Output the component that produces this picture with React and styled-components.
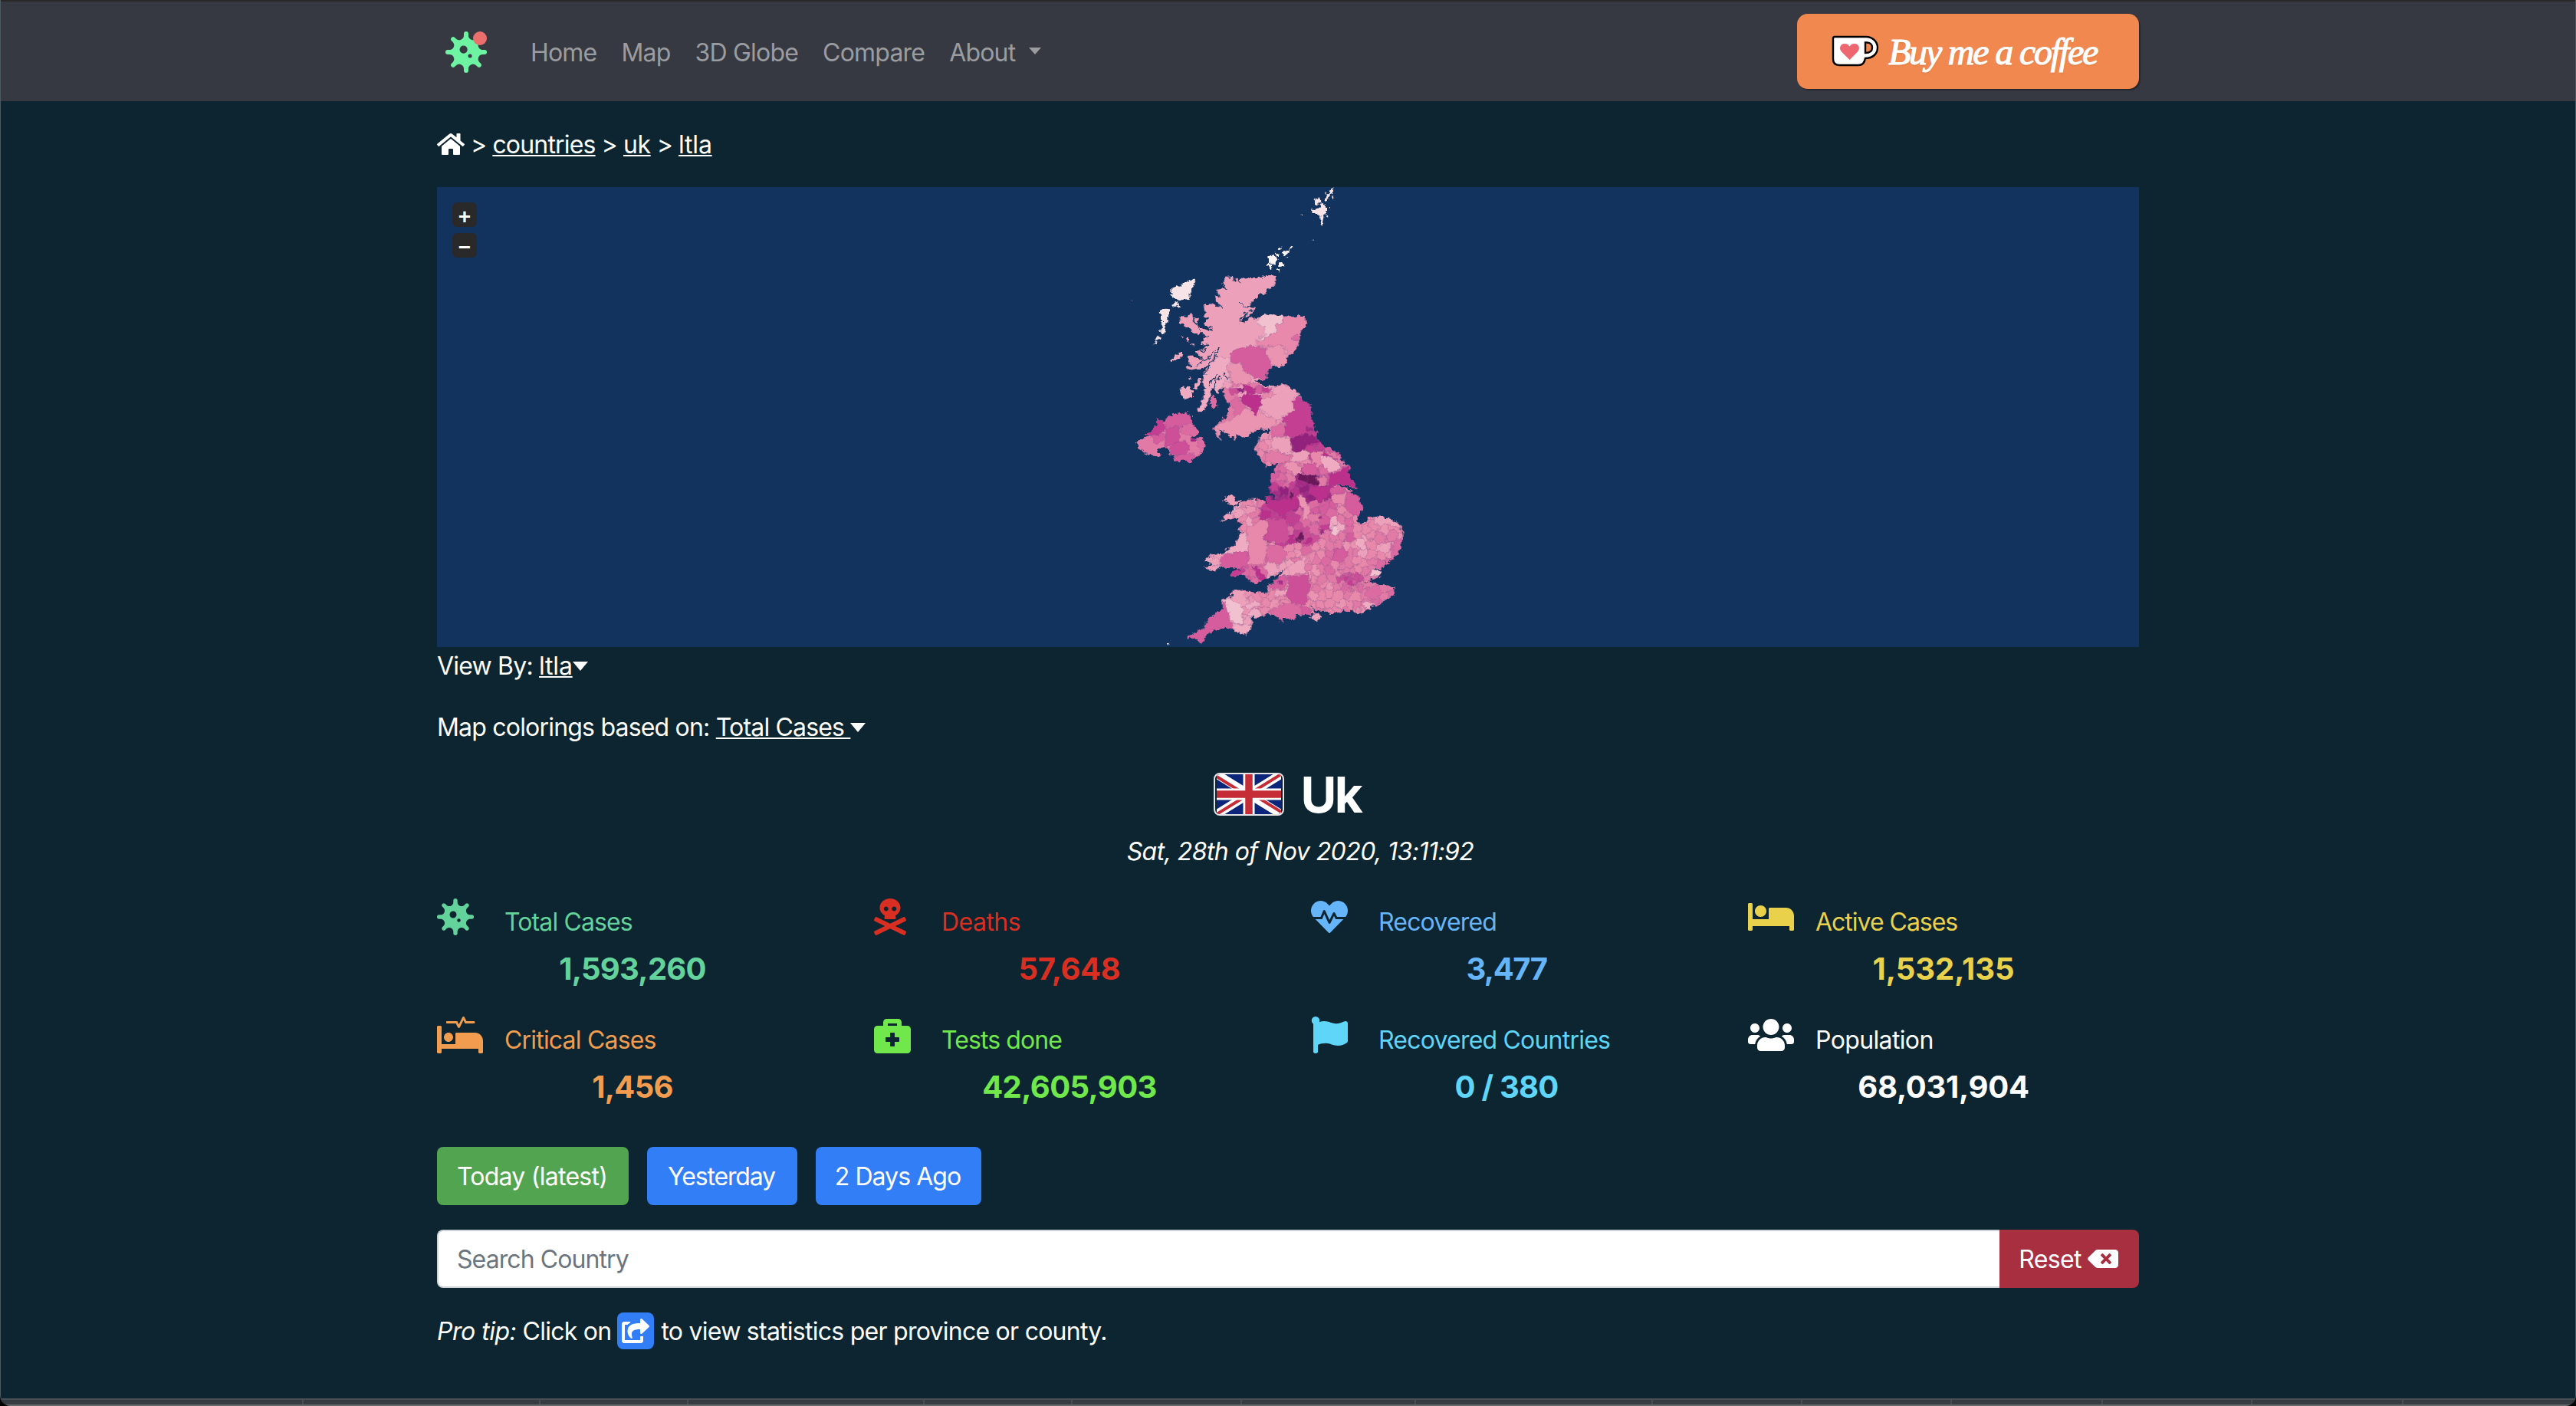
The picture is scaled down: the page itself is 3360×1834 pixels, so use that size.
import React from "react";
import styled, { createGlobalStyle } from "styled-components";
import {
  FaVirus,
  FaSkullCrossbones,
  FaHeartbeat,
  FaBed,
  FaProcedures,
  FaBriefcaseMedical,
  FaFlag,
  FaUsers,
  FaHome,
  FaBackspace,
  FaShareSquare,
} from "react-icons/fa";

const GlobalStyle = createGlobalStyle`
  *, *::before, *::after { box-sizing: border-box; }
  html { background: #000; }
  body {
    margin: 0;
    background: #000;
    color: #fff;
    font: 430 32px/50px Inter, "Liberation Sans", sans-serif;
    letter-spacing: -0.8px;
  }
`;

const Page = styled.div`
  height: 1834px;
  overflow: hidden;
  display: flex;
  flex-direction: column;
  background: #0c2530;
  border: solid #4b5a61;
  border-width: 0 1px;
  border-radius: 0 0 14px 14px;
`;

const NavBar = styled.nav`
  height: 132px;
  flex: none;
  background: #363941;
  border-top: 2px solid #272727;
`;

const Container = styled.div`
  width: 2220px;
  margin: 0 auto;
`;

const NavInner = styled(Container)`
  display: flex;
  align-items: flex-start;
  padding-top: 16px;
`;

const Brand = styled.a`
  position: relative;
  display: block;
  width: 54px;
  height: 54px;
  margin: 23px 57px 0 11px;
  svg { display: block; }
`;

const BrandDot = styled.span`
  position: absolute;
  top: 0;
  right: 0;
  width: 18px;
  height: 18px;
  border-radius: 50%;
  background: #eb6f6c;
`;

const NavLinks = styled.div`
  display: flex;
  gap: 32px;
  padding-top: 26px;
`;

const NavLink = styled.a`
  color: #9a9ca0;
`;

const Caret = styled.span`
  display: inline-block;
  margin-left: ${(p) => p.$gap || 0}px;
  vertical-align: ${(p) => (p.$small ? 9 : 5)}px;
  border: ${(p) => (p.$small ? 8.5 : 10)}px solid transparent;
  border-top: ${(p) => (p.$small ? 9 : 12)}px solid currentColor;
  border-bottom: 0;
`;

const CoffeeButton = styled.button`
  display: flex;
  align-items: center;
  width: 446px;
  height: 98px;
  margin: 0 0 0 auto;
  padding: 0 0 0 45px;
  border: 0;
  border-radius: 14px;
  background: #f0884f;
  box-shadow: 2px 2px 1px rgba(0, 0, 0, 0.28);
  color: #fff;
`;

const CoffeeText = styled.span`
  margin: 2px 0 0 12px;
  font: italic 400 48px/60px "Liberation Serif", serif;
  letter-spacing: -2.2px;
  white-space: nowrap;
  -webkit-text-stroke: 1.1px #fff;
  text-shadow: 0 2px 2px rgba(34, 34, 34, 0.08);
`;

const Main = styled(Container)`
  padding-top: 32px;
  flex: none;
`;

const Breadcrumb = styled.div`
  display: flex;
  align-items: center;
  height: 48px;
  gap: 8px;
  svg { display: block; width: 36px; }
  > :not(svg) { padding-top: 2px; }
`;

const TextLink = styled.a`
  color: #fff;
  letter-spacing: ${(p) => p.$ls ?? -0.82}px;
  text-decoration: underline;
  text-decoration-thickness: 2px;
  text-underline-offset: 2px;
  text-decoration-skip-ink: none;
  white-space: pre;
`;

const MapFrame = styled.div`
  position: relative;
  display: flex;
  justify-content: center;
  height: 600px;
  margin-top: 32px;
  background: #12335e;
`;

const ZoomControls = styled.div`
  position: absolute;
  left: 20px;
  top: 20px;
  display: flex;
  flex-direction: column;
  gap: 8px;
`;

const ZoomButton = styled.button`
  width: 32px;
  height: 32px;
  padding: 5px 0 0;
  border: 0;
  border-radius: 6px;
  background: #292929;
  color: #fff;
  text-align: center;
  font: 700 28px/28px "Liberation Sans", sans-serif;
`;

const OptionLine = styled.div`
  height: 48px;
  margin-bottom: ${(p) => p.$after || 0}px;
`;

const Title = styled.h1`
  display: flex;
  justify-content: center;
  align-items: center;
  gap: 22px;
  height: 77px;
  margin: 26px 0 11px;
  padding-right: 2px;
  font-size: 64px;
  line-height: 77px;
  font-weight: 680;
  letter-spacing: -2.6px;
`;

const FlagBox = styled.span`
  width: 92px;
  height: 56px;
  border: 2px solid #e4e4e6;
  border-radius: 8px;
  overflow: hidden;
  padding: 0 2px;
  margin-bottom: 1px;
  svg { display: block; }
`;

const DateLine = styled.div`
  height: 48px;
  padding-left: 32px;
  text-align: center;
  font-style: italic;
  letter-spacing: -0.55px;
`;

const StatsGrid = styled.div`
  display: grid;
  grid-template-columns: repeat(4, 570px);
  grid-auto-rows: 154px;
  margin: 38px -60px 0 0;
`;

const Stat = styled.section`
  width: 510px;
  color: ${(p) => p.$color};
`;

const StatHead = styled.div`
  display: flex;
  height: 68px;
`;

const StatIcon = styled.div`
  width: 88px;
  flex: none;
  svg { display: block; height: 48px; width: ${(p) => p.$w}px; }
`;

const StatLabel = styled.div`
  padding-top: 6px;
  letter-spacing: ${(p) => p.$ls - 0.06}px;
  white-space: nowrap;
`;

const StatValue = styled.div`
  text-align: center;
  font-size: 40px;
  line-height: 48px;
  font-weight: 680;
  letter-spacing: ${(p) => p.$ls}px;
`;

const DayButtons = styled.div`
  display: flex;
  gap: 24px;
  margin-top: 16px;
`;

const DayButton = styled.button`
  width: ${(p) => p.$w}px;
  height: 76px;
  padding: 2px 2px 0 0;
  border: 0;
  border-radius: 8px;
  background: ${(p) => (p.$active ? "#53a451" : "#327ef7")};
  color: #fff;
  font: inherit;
  letter-spacing: ${(p) => p.$ls}px;
`;

const SearchGroup = styled.div`
  display: flex;
  height: 76px;
  margin-top: 32px;
`;

const SearchInput = styled.input`
  flex: 1;
  min-width: 0;
  padding: 2px 24px 0;
  border: 2px solid #ced4da;
  border-right: 0;
  border-radius: 8px 0 0 8px;
  background: #fff;
  font: inherit;
  letter-spacing: -0.92px;
  &::placeholder { color: #6c757d; opacity: 1; }
`;

const ResetButton = styled.button`
  display: flex;
  align-items: center;
  justify-content: center;
  gap: 8px;
  width: 182px;
  padding: 0 2px 0 0;
  border: 0;
  border-radius: 0 8px 8px 0;
  background: #a72f40;
  color: #fff;
  font: inherit;
  letter-spacing: -0.65px;
  svg { display: block; width: 40px; }
  span { padding-top: 2px; }
`;

const Tip = styled.p`
  display: flex;
  align-items: center;
  height: 48px;
  margin: 32px 0 0;
  white-space: pre;
`;

const TipText = styled.span`
  padding-top: 2px;
  letter-spacing: -0.74px;
`;

const TipLead = styled.em`
  padding-top: 2px;
  letter-spacing: -0.5px;
`;

const ShareBadge = styled.span`
  display: flex;
  align-items: center;
  justify-content: center;
  width: 48px;
  height: 48px;
  margin: 0 9px 0 8px;
  border-radius: 8px;
  background: #327ef7;
  svg { width: 36px; }
`;

const TableEdge = styled.div`
  display: flex;
  flex: none;
  height: 10px;
  margin-top: 64px;
  background: #373b42;
  border-top: 2px solid #484f54;
  border-bottom: 2px solid #676a6b;
`;

const HeadCell = styled.span`
  flex: none;
  width: ${(p) => p.$w}px;
  border-right: 2px solid #484f54;
`;

/* ---------- choropleth map ---------- */

const SHADES = {
  O: "#fdf5f3", N: "#f7e4e6", L: "#f1c1d0", K: "#eeabc2", P: "#eda0ba",
  Q: "#eb94b1", R: "#e888aa", S: "#e27aa6", T: "#dc6ba2", U: "#d55c9d",
  V: "#cd4f98", W: "#c43f92", X: "#bb308b", Y: "#a52a85", Z: "#92227b", D: "#6b185a",
};
const ORDER = "ONLKPQRSTUVWXYZD";

// The south is drawn 900 units below the north origin.
const parse = (s, dy = 0) =>
  s.trim().split(/\s+/).map((p) => {
    const [x, y] = p.split(",").map(Number);
    return [x, y + dy];
  });
const toPoints = (pts) => pts.map((p) => p[0].toFixed(1) + "," + p[1].toFixed(1)).join(" ");

const COAST = [
  ...parse(`480,354 492,366 505,364 508,382 518,362 526,384 532,376 548,370 604,368 640,356 675,360 668,405 640,415
  604,440 575,466 572,482 596,486 570,515 548,520 530,542 552,540 572,526 600,522 640,508 662,514 700,518 780,516 796,548
  775,575 762,620 748,652 722,668 718,700 695,714 660,714 638,730 636,760 625,768 590,770 600,776 625,788 675,788 700,782
  725,795 760,812 775,840 805,865 812,910 825,960`),
  ...parse(`832,65 835,100 860,125 890,135 918,155 935,185 966,208 955,235 975,265 990,292 970,290 950,278 905,278
  930,284 950,290 995,320 1015,370 1000,395 985,412 1003,428 1022,425 1032,403 1100,405 1140,418 1165,445 1169,485 1155,545
  1120,575 1085,576 1118,580 1085,605 1050,608 1082,612 1080,635 1040,655 1005,653 1060,660 1075,672 1138,675 1132,708
  1085,740 1050,755 1005,783 960,770 890,780 850,770 830,768 805,750 820,770 828,780 800,785 750,790 750,805 700,800
  698,818 690,800 645,782 590,798 582,785 575,845 555,866 530,855 500,840 470,835 430,850 405,862 392,880 380,900 372,885
  345,875 325,885 328,868 350,862 385,840 410,800 460,765 465,725 500,715 500,695 550,690 635,702 640,680 680,640 712,602
  675,632 640,642 600,665 570,655 550,630 500,632 500,620 540,610 465,595 450,605 432,615 400,605 395,595 425,590 388,575
  415,550 460,545 510,515 535,468 550,462 525,460 530,440 545,432 528,425 525,405 480,415 455,420 500,380 510,365 535,350
  560,335 615,335 640,355 630,325 650,315 665,342 668,325 645,300 655,275 648,260 650,235 668,235 668,210 680,195 665,195
  655,190 650,205 630,210 625,190 608,175 592,135 610,85 650,65 640,62 600,60 575,80 550,92 515,80 512,102 480,75 450,60
  458,105 445,95 430,60 440,45 445,40`, 900),
  ...parse(`478,905 490,880 490,860 468,830 470,800 455,800 448,820 430,800 418,805 412,840 400,870 395,892 368,892
  370,878 385,840 400,800 385,790 390,745 405,715 385,720 340,728 315,722 340,712 325,675 345,670 370,680 395,690 350,655
  385,650 400,635 375,625 395,600 380,575 370,585 350,585 330,560 290,540 305,512 328,520 338,498 355,530 355,555 385,568
  410,575 425,570 385,545 410,525 385,515 395,505 388,475 415,465 450,482 430,435 455,440 440,415 480,405 460,395`),
];

const ULSTER = parse(`205,22 235,30 255,5 300,-3 345,5 345,35 360,50 375,75 342,95 380,95 395,105 398,130 385,155
  355,162 350,180 335,192 320,182 275,188 272,168 255,158 250,135 235,125 210,140 222,158 205,168 180,162 150,148 125,112
  145,98 180,90 155,80 190,65 205,35`, 900);

const NORTH = [
  ["K", "450,675 500,682 480,712 490,740 497,780 470,765 460,800 448,820 420,800 412,840 400,870 395,892 368,892 385,840 400,800 385,790 390,745 405,715 430,690"],
  ["L", "600,522 640,508 662,514 695,518 705,543 675,550 672,585 640,590 630,608 595,608 630,595 628,555 600,548"],
  ["R", "695,514 780,512 800,548 775,575 762,620 748,652 722,665 705,640 680,630 640,640 592,632 595,612 633,608 645,590 672,585 676,550 705,543"],
  ["T", "740,598 755,590 766,598 758,614 736,612"],
  ["Q", "630,645 680,630 705,640 708,662 722,668 718,700 695,714 655,708 648,680 630,665"],
  ["U", "500,655 530,645 575,634 630,640 632,665 650,690 655,714 638,730 636,760 625,768 600,758 545,740 540,700 498,700"],
  ["Q", "478,712 515,700 545,706 540,725 570,745 575,780 540,785 500,775 490,740"],
  ["S", "500,775 540,785 575,778 600,780 620,792 590,800 545,790 500,795"],
  ["S", "468,800 495,795 520,820 535,850 560,875 575,885 555,900 520,920 490,925 445,942 478,905 490,870 468,830"],
  ["T", "495,850 520,835 535,850 560,870 540,895 515,915 505,880"],
  ["V", "490,802 520,798 522,820 495,825"],
  ["Q", "490,930 550,880 610,885 630,910 670,915 675,940 655,960 630,960 600,955 575,980 550,992 515,980 512,1002 480,975 450,960 458,1005 430,960 445,942"],
  ["P", "612,835 655,800 690,782 725,795 760,812 735,850 745,885 700,910 675,930 640,895 612,885"],
  ["R", "620,835 640,812 660,810 670,828 650,836"],
  ["X", "545,790 560,783 590,802 588,825 560,822"],
  ["X", "530,832 560,822 590,828 618,825 608,880 595,905 575,880 540,855"],
  ["Z", "518,800 550,798 550,815 525,818"],
  ["U", "590,795 617,790 620,818 590,822"],
  ["W", "620,792 655,800 630,818 618,815"],
  ["W", "735,855 762,828 775,840 805,865 815,910 830,960 836,970 815,975 780,985 735,992 705,980 710,945 695,920 745,885"],
];

const SOUTH = [
  ["Y", "790,55 815,48 825,70 795,70"],
  ["Z", "730,95 785,78 825,85 838,108 800,120 780,145 745,148 730,130"],
  ["T", "655,60 695,35 710,50 705,82 655,92"],
  ["P", "655,95 700,85 728,100 735,130 735,160 700,155 655,130"],
  ["S", "635,150 660,145 725,160 725,185 680,195 655,190 630,185"],
  ["P", "735,150 800,140 808,160 770,190 730,185"],
  ["R", "808,150 860,145 850,190 835,215 810,195"],
  ["K", "845,170 885,165 925,195 925,215 890,228 850,195"],
  ["S", "860,150 900,150 935,185 960,208 930,205 905,170"],
  ["Q", "705,195 740,185 775,215 775,240 745,235 710,210"],
  ["U", "775,195 830,195 838,240 780,240"],
  ["X", "878,232 925,225 955,205 960,240 975,265 995,295 950,278 900,278 880,278"],
  ["S", "838,240 870,250 872,280 840,285"],
  ["D", "795,240 835,240 838,275 795,270"],
  ["D", "758,236 795,240 795,268 760,255"],
  ["Z", "765,290 800,278 803,305 770,308"],
  ["X", "803,285 882,285 875,325 840,345 803,315"],
  ["Z", "785,315 820,320 830,340 805,345"],
  ["U", "882,290 945,280 950,298 890,320"],
  ["U", "950,300 990,315 1018,370 1000,395 975,395 945,370"],
  ["R", "892,318 950,300 940,355 895,345"],
  ["X", "630,345 660,345 700,335 760,325 755,370 720,385 695,402 655,375"],
  ["Z", "648,312 658,310 668,332 655,338"],
  ["Z", "685,290 720,290 720,318 690,315"],
  ["D", "732,305 742,308 736,335 728,330"],
  ["Q", "765,310 790,335 808,375 795,410 777,415 782,370 760,350"],
  ["V", "640,410 705,410 720,440 726,490 700,508 655,500 622,490 645,460"],
  ["T", "640,510 690,510 715,550 705,575 670,590 640,575 632,545"],
  ["D", "755,480 775,462 785,472 775,500 757,500"],
  ["W", "738,462 760,462 752,490 738,485"],
  ["X", "785,490 818,490 810,505 785,505"],
  ["R", "555,445 600,425 640,410 645,460 622,490 640,510 632,545 632,590 565,590 568,540 560,480"],
  ["K", "460,547 510,515 535,468 550,465 565,500 565,540 460,548"],
  ["U", "455,570 470,548 565,540 565,590 500,610 452,590"],
  ["X", "580,598 600,600 632,640 625,655 605,645"],
  ["W", "496,634 498,620 540,600 550,615 530,632"],
  ["P", "640,580 680,590 690,618 650,640 630,600"],
  ["U", "470,730 490,790 500,840 470,838 430,850 405,862 392,880 380,903 372,885 345,875 323,888 326,866 350,862 385,840 410,800 456,765"],
  ["L", "468,725 500,725 530,735 545,775 540,820 510,820 490,790"],
  ["K", "510,820 545,825 580,825 575,848 555,868 530,857 503,840"],
  ["P", "500,695 550,690 560,730 590,745 540,755 500,725"],
  ["K", "545,755 590,730 620,745 570,762"],
  ["T", "645,775 690,745 740,740 770,755 775,788 750,807 700,802 698,820 690,802 645,785"],
  ["V", "712,630 760,638 800,625 805,680 790,745 745,740 712,715 722,670"],
  ["P", "665,690 718,685 715,710 670,718"],
  ["U", "645,680 680,640 712,635 715,675 690,685"],
  ["Y", "682,650 696,655 688,668 680,660"],
  ["P", "715,600 790,560 790,620 725,632"],
  ["P", "1055,403 1100,403 1140,416 1168,445 1130,440 1100,430 1060,432"],
  ["P", "1070,530 1090,505 1130,500 1115,540 1085,545"],
  ["T", "1130,495 1172,480 1158,545 1120,572"],
  ["L", "1045,608 1084,612 1082,632 1045,632"],
  ["T", "1030,680 1075,672 1085,700 1060,730 1020,710"],
  ["L", "888,445 910,440 925,455 905,475 890,468"],
  ["K", "1015,735 1060,740 1050,757 1020,764"],
  ["K", "985,490 1010,482 1030,530 1010,530 990,512"],
  ["U", "900,540 935,520 955,550 925,590 895,570"],
  ["Y", "840,400 850,395 853,410 843,412"],
  ["Y", "847,455 858,450 860,465 848,466"],
];

const ULSTER_AREAS = [
  ["W", "205,22 235,30 240,60 215,80 180,85 155,80 190,65"],
  ["U", "240,30 255,5 300,-5 347,5 345,30 320,42 240,55"],
  ["V", "245,55 295,48 300,100 280,125 235,125 245,90"],
  ["T", "300,45 345,38 377,75 350,92 300,75"],
  ["U", "180,85 245,75 243,100 205,120"],
  ["V", "255,140 280,110 320,105 335,130 320,158 260,158"],
  ["U", "275,160 350,155 350,180 335,194 320,184 272,190"],
  ["T", "362,95 396,100 400,130 385,155 370,130"],
  ["Y", "338,100 355,93 362,105 345,112"],
];

const ISLES = [
  ["N", "262,410 300,395 355,366 358,385 335,425 335,450 290,455 262,440"],
  ["N", "265,470 290,460 295,475 270,485"],
  ["N", "218,500 235,488 262,490 245,540 238,585 222,585 225,540 225,515"],
  ["N", "205,603 224,596 218,610 207,614"],
  ["N", "192,632 203,614 206,618"],
  ["P", "320,600 335,600 337,615 325,617"],
  ["P", "338,625 348,625 345,633"],
  ["P", "300,597 312,599 308,603"],
  ["P", "362,545 358,530 372,520 368,545"],
  ["K", "258,685 310,660 312,668 262,697"],
  ["K", "298,825 305,798 335,790 345,815 345,835 318,842"],
  ["K", "345,800 378,758 382,775 360,808"],
  ["K", "326,770 338,754 336,768"],
  ["T", "418,835 430,828 440,850 442,870 425,875 416,860"],
  ["T", "322,890 334,888 332,896"],
  ["O", "643,285 660,276 680,292 670,310 648,312"],
  ["O", "638,316 650,314 660,334 645,332"],
  ["O", "680,308 702,304 706,318 688,322"],
  ["O", "678,250 694,246 690,264"],
  ["O", "670,272 682,272 684,284 674,282"],
  ["O", "698,270 742,242 722,268 706,280"],
  ["O", "712,285 724,283 722,292"],
  ["O", "680,333 688,330 686,344"],
  ["N", "846,85 858,70 870,90 870,110 860,125 853,166 844,162 850,122 838,120 813,112 810,98 840,98"],
  ["N", "820,66 848,50 850,78 835,80"],
  ["N", "868,40 882,33 880,60 862,68"],
  ["N", "884,20 902,13 898,38 882,42"],
  ["N", "890,50 902,50 896,57"],
  ["N", "866,120 878,122 872,130"],
  ["N", "877,90 887,90 882,96"],
  ["N", "772,122 779,122 776,127"],
  ["N", "814,218 819,218 816,223"],
  ["K", "106,458 115,458 112,461"],
  ["P", "468,1235 480,1218 510,1220 515,1235 535,1242 505,1264 485,1250"],
  ["P", "800,1693 830,1680 856,1693 832,1711"],
  ["N", "246,1795 256,1793 252,1804"],
];

const LOCHS = [
  "365,712 395,690 452,645", "395,745 415,705 440,668", "430,800 435,770 462,755", "490,760 470,745",
  "530,465 545,475 575,482", "530,530 550,510 585,492", "385,590 410,600", "385,625 412,632",
  "400,555 425,560", "445,470 465,480", "350,650 385,655 405,648", "412,790 418,770 440,750",
  "505,366 515,385", "525,370 530,388",
];

// Reference shades that the small districts take their colour from.
const SHADE_POINTS = `560,380,R 600,380,S 570,365,R 640,385,W 620,370,T 540,440,Q 500,390,P 430,590,P 600,620,T 550,640,T
  680,230,T 720,240,R 665,260,U 700,270,U 670,300,X 700,310,Y 740,300,X 770,270,Y 720,330,X 820,300,Y 750,330,X
  620,120,Q 640,170,R 850,130,W 890,150,U 860,230,U 860,320,X 850,350,U 880,370,T 920,340,R 980,350,U 930,400,S
  820,380,T 780,420,T 740,410,W 720,440,U 850,430,V 820,430,S 760,450,U 745,475,X 800,490,V 800,530,S 740,540,R
  700,580,Q 900,440,P 950,465,T 880,480,S 930,500,R 1000,450,R 1050,480,R 1110,450,R 1100,480,S 1010,520,Q 1060,550,Q
  860,530,R 890,560,T 860,600,S 830,560,R 920,560,T 960,560,S 1000,590,R 1040,590,S 1090,595,T 945,642,V 975,645,V
  920,670,S 1000,680,S 950,690,S 960,615,S 920,620,S 1020,630,S 820,620,R 820,680,S 830,730,R 870,690,R 900,690,R
  930,710,S 960,740,R 1000,740,R 1040,720,S 1100,700,S 860,750,R 690,730,R 620,770,R 560,790,P 610,720,R 560,720,Q
  780,600,S 700,620,P 760,760,T`
  .trim().split(/\s+/).map((s) => {
    const [x, y, c] = s.split(",");
    return [Number(x), Number(y) + 900, ORDER.indexOf(c)];
  });

const makeRandom = (seed) => () => {
  seed = (seed * 1664525 + 1013904223) % 4294967296;
  return seed / 4294967296;
};

function nearestShade(x, y) {
  let best = SHADE_POINTS[0];
  let dist = Infinity;
  for (const p of SHADE_POINTS) {
    const d = (p[0] - x) ** 2 + (p[1] - y) ** 2;
    if (d < dist) { dist = d; best = p; }
  }
  return best[2];
}

// Cuts the polygon by the line halfway between two seeds and keeps the side of the first.
function clipHalf(poly, a, b) {
  const mx = (a[0] + b[0]) / 2, my = (a[1] + b[1]) / 2;
  const nx = b[0] - a[0], ny = b[1] - a[1];
  const side = (p) => (p[0] - mx) * nx + (p[1] - my) * ny;
  const out = [];
  for (let i = 0; i < poly.length; i++) {
    const p = poly[i], q = poly[(i + 1) % poly.length];
    const sp = side(p), sq = side(q);
    if (sp <= 0) out.push(p);
    if ((sp < 0 && sq > 0) || (sp > 0 && sq < 0)) {
      const t = sp / (sp - sq);
      out.push([p[0] + (q[0] - p[0]) * t, p[1] + (q[1] - p[1]) * t]);
    }
  }
  return out;
}

function buildDistricts() {
  const rnd = makeRandom(77);
  const seeds = [];
  for (let y = 970; y < 1800; y += 33) {
    for (let x = 380; x < 1190; x += 33) {
      seeds.push([x + rnd() * 28, y + rnd() * 28]);
    }
  }
  for (let i = 0; i < 22; i++) seeds.push([920 + rnd() * 85, 1525 + rnd() * 55]);
  for (let i = 0; i < 16; i++) seeds.push([655 + rnd() * 100, 1180 + rnd() * 60]);
  return seeds.map((s) => {
    let poly = [[s[0] - 60, s[1] - 60], [s[0] + 60, s[1] - 60], [s[0] + 60, s[1] + 60], [s[0] - 60, s[1] + 60]];
    for (const o of seeds) {
      if (o === s || Math.abs(o[0] - s[0]) > 120 || Math.abs(o[1] - s[1]) > 120) continue;
      poly = clipHalf(poly, s, o);
    }
    const shift = Math.round(rnd() * 1.6 - 0.8);
    const idx = Math.min(14, Math.max(3, nearestShade(s[0], s[1]) + shift));
    return { points: toPoints(poly), fill: SHADES[ORDER[idx]] };
  });
}

const DISTRICTS = buildDistricts();

const areas = (list, dy = 0) =>
  list.map(([c, pts], i) => <polygon key={i} points={toPoints(parse(pts, dy))} fill={SHADES[c]} />);

function UkMap() {
  return (
    <svg width="480" height="600" viewBox="0 12 1440 1800" aria-label="Map of the United Kingdom">
      <defs>
        <filter id="coastline" x="0" y="0" width="1440" height="1812" filterUnits="userSpaceOnUse" colorInterpolationFilters="sRGB">
          <feTurbulence type="fractalNoise" baseFrequency="0.055" numOctaves="3" seed="4" result="noise" />
          <feDisplacementMap in="SourceGraphic" in2="noise" scale="24" xChannelSelector="R" yChannelSelector="G" />
        </filter>
        <clipPath id="mainland"><polygon points={toPoints(COAST)} /></clipPath>
        <clipPath id="ulster"><polygon points={toPoints(ULSTER)} /></clipPath>
      </defs>
      <g filter="url(#coastline)" stroke="#7d4a86" strokeOpacity="0.5" strokeWidth="1.8" strokeLinejoin="round">
        <g clipPath="url(#mainland)">
          <polygon points={toPoints(COAST)} fill={SHADES.P} stroke="none" />
          {DISTRICTS.map((d, i) => <polygon key={i} points={d.points} fill={d.fill} />)}
          {areas(NORTH)}
          {areas(SOUTH, 900)}
        </g>
        <g clipPath="url(#ulster)">
          <polygon points={toPoints(ULSTER)} fill={SHADES.S} />
          {areas(ULSTER_AREAS, 900)}
        </g>
        <g strokeOpacity="0">{areas(ISLES)}</g>
        <g fill="none" stroke="#12335e" strokeOpacity="1" strokeWidth="4">
          {LOCHS.map((l) => <polyline key={l} points={l} />)}
        </g>
      </g>
    </svg>
  );
}

function UnionFlag() {
  return (
    <svg width="84" height="52" viewBox="0 0 84 52">
      <rect width="84" height="52" fill="#0a2579" />
      <path d="M0 0L84 52M84 0L0 52" stroke="#fff" strokeWidth="11" />
      <path d="M0 3L42 29M84 0L42 26M42 26L0 52M42 23L84 49" stroke="#c62c36" strokeWidth="4" />
      <path d="M42 0V52M0 26H84" stroke="#fff" strokeWidth="15" />
      <path d="M42 0V52M0 26H84" stroke="#c62c36" strokeWidth="9.5" />
    </svg>
  );
}

function Cup() {
  return (
    <svg width="62" height="42" viewBox="0 0 62 42">
      <path
        d="M4 2H45C54 2 60 9 60 16C60 24 54 30 44 30C43 36 40 39 35 39H10C5 39 2 36 2 31V4C2 2.600 2.600 2 4 2Z"
        fill="#fff" stroke="#000" strokeWidth="2.4"
      />
      <path d="M44 9.500H46C50 9.500 53 12 53 16C53 20.500 50 23 44 23Z" fill="#f0884f" stroke="#000" strokeWidth="2.4" />
      <path d="M23.500 32L13 21.500C9 17 11.500 11 17 11C20 11 22 12 23.500 14.500C25 12 27 11 30 11C35.500 11 38 17 34 21.500Z" fill="#ee6670" />
    </svg>
  );
}

const STATS = [
  { label: "Total Cases", value: "1,593,260", color: "#64d29b", Icon: FaVirus, iw: 48, ls: -0.82, vls: -0.75 },
  { label: "Deaths", value: "57,648", color: "#d92f22", Icon: FaSkullCrossbones, iw: 42, ls: -0.48, vls: -0.38 },
  { label: "Recovered", value: "3,477", color: "#66b5f8", Icon: FaHeartbeat, iw: 48, ls: -0.76, vls: -1.5 },
  { label: "Active Cases", value: "1,532,135", color: "#ead14c", Icon: FaBed, iw: 60, ls: -0.95, vls: -0.05 },
  { label: "Critical Cases", value: "1,456", color: "#f19c4f", Icon: FaProcedures, iw: 60, ls: -0.75, vls: -0.7 },
  { label: "Tests done", value: "42,605,903", color: "#70e84b", Icon: FaBriefcaseMedical, iw: 48, ls: -0.86, vls: -0.6 },
  { label: "Recovered Countries", value: "0 / 380", color: "#5fd5f8", Icon: FaFlag, iw: 48, ls: -0.73, vls: -0.75 },
  { label: "Population", value: "68,031,904", color: "#ffffff", Icon: FaUsers, iw: 60, ls: -0.57, vls: -0.28 },
];

const HEAD_WIDTHS = [395, 309, 193, 308, 193, 221, 227, 309, 195, 195, 197, 195, 197];

export default function App() {
  return (
    <>
      <GlobalStyle />
      <Page>
        <NavBar>
          <NavInner>
            <Brand>
              <FaVirus size={54} color="#6ef3a3" />
              <BrandDot />
            </Brand>
            <NavLinks>
              <NavLink>Home</NavLink>
              <NavLink>Map</NavLink>
              <NavLink>3D Globe</NavLink>
              <NavLink>Compare</NavLink>
              <NavLink>About<Caret $small $gap={18} /></NavLink>
            </NavLinks>
            <CoffeeButton>
              <Cup />
              <CoffeeText>Buy me a coffee</CoffeeText>
            </CoffeeButton>
          </NavInner>
        </NavBar>

        <Main>
          <Breadcrumb>
            <FaHome size={32} />
            <span>&gt;</span>
            <TextLink>countries</TextLink>
            <span>&gt;</span>
            <TextLink $ls={-0.4}>uk</TextLink>
            <span>&gt;</span>
            <TextLink $ls={-0.2}>ltla</TextLink>
          </Breadcrumb>

          <MapFrame>
            <UkMap />
            <ZoomControls>
              <ZoomButton>+</ZoomButton>
              <ZoomButton>−</ZoomButton>
            </ZoomControls>
          </MapFrame>

          <OptionLine $after={32}>
            View By: <TextLink $ls={-0.2}>ltla</TextLink><Caret />
          </OptionLine>
          <OptionLine>
            Map colorings based on: <TextLink>{"Total Cases "}</TextLink><Caret />
          </OptionLine>

          <Title>
            <FlagBox><UnionFlag /></FlagBox>
            <span>Uk</span>
          </Title>
          <DateLine>Sat, 28th of Nov 2020, 13:11:92</DateLine>

          <StatsGrid>
            {STATS.map(({ label, value, color, Icon, iw, ls, vls }) => (
              <Stat key={label} $color={color}>
                <StatHead>
                  <StatIcon $w={iw}><Icon /></StatIcon>
                  <StatLabel $ls={ls}>{label}</StatLabel>
                </StatHead>
                <StatValue $ls={vls}>{value}</StatValue>
              </Stat>
            ))}
          </StatsGrid>

          <DayButtons>
            <DayButton $active $w={250} $ls={-0.75}>Today (latest)</DayButton>
            <DayButton $w={196} $ls={-1.15}>Yesterday</DayButton>
            <DayButton $w={216} $ls={-0.95}>2 Days Ago</DayButton>
          </DayButtons>

          <SearchGroup>
            <SearchInput placeholder="Search Country" />
            <ResetButton>
              <span>Reset</span>
              <FaBackspace size={32} />
            </ResetButton>
          </SearchGroup>

          <Tip>
            <TipLead>Pro tip:</TipLead>
            <TipText>{" Click on"}</TipText>
            <ShareBadge><FaShareSquare size={32} /></ShareBadge>
            <TipText>to view statistics per province or county.</TipText>
          </Tip>
        </Main>

        <TableEdge>
          {HEAD_WIDTHS.map((w, i) => <HeadCell key={i} $w={w} />)}
        </TableEdge>
      </Page>
    </>
  );
}
